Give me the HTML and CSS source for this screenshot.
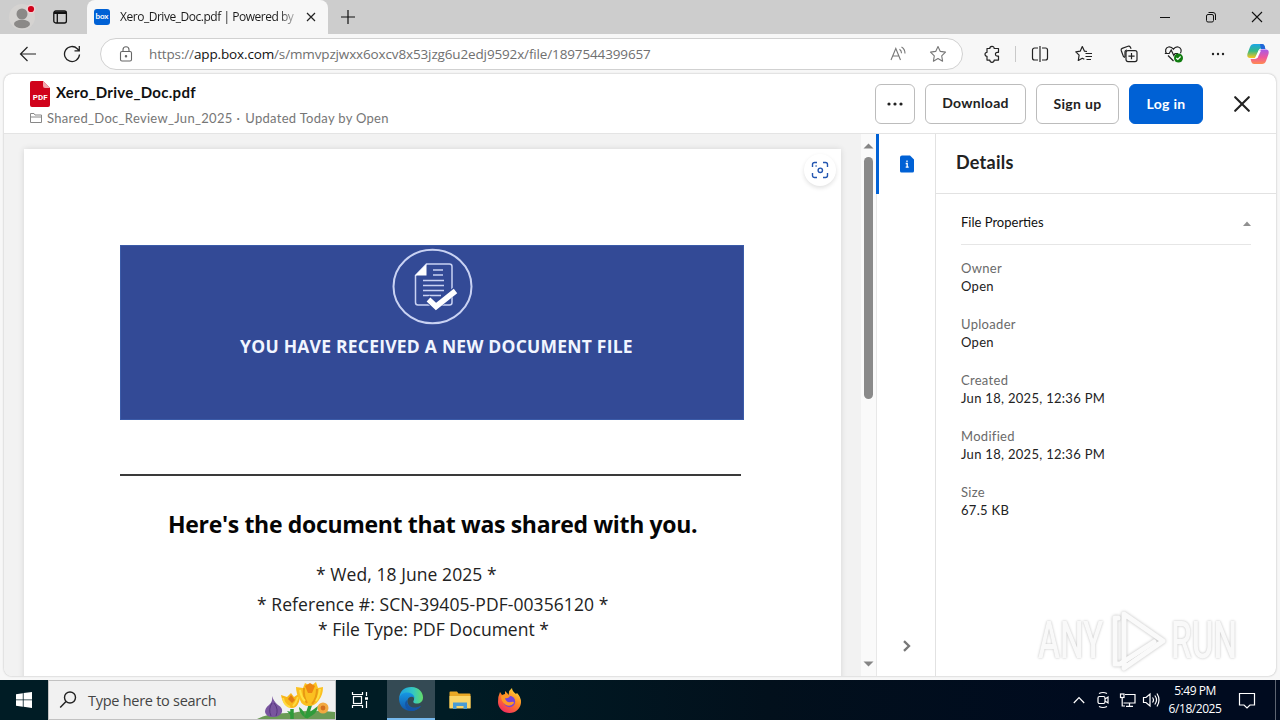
FILE: index.html
```html
<!DOCTYPE html>
<html lang="en">
<head>
<meta charset="utf-8">
<title>Xero_Drive_Doc.pdf | Powered by Box</title>
<link rel="stylesheet" href="styles.css">
</head>
<body>
<div class="desktop">
  <div class="tabstrip">
    <svg class="profile" width="30" height="34" viewBox="0 0 30 34"><circle cx="15" cy="17" r="13" fill="#d5d3d1"/><circle cx="15" cy="14" r="5.500" fill="#8b8987"/><ellipse cx="15" cy="24" rx="8" ry="4.200" fill="#8b8987"/><circle cx="24" cy="9" r="4.500" fill="#f0d0d2"/><circle cx="24" cy="9" r="3.100" fill="#d0021b"/></svg>
    <svg class="tabmenu" width="16" height="16" viewBox="0 0 16 16" fill="none" stroke="#111" stroke-width="1.300"><rect x="1.800" y="2" width="12.600" height="12" rx="2"/><path d="M2 3.800h12.400" stroke-width="2.400"/><path d="M5.300 4v10"/></svg>
    <div class="tab">
      <span class="favicon">box</span>
      <span class="tab-title">Xero_Drive_Doc.pdf | Powered by</span>
      <svg width="10" height="10" viewBox="0 0 10 10" stroke="#222" stroke-width="1.200"><path d="M1 1l8 8M9 1l-8 8"/></svg>
    </div>
    <svg class="newtab" width="14" height="14" viewBox="0 0 14 14" stroke="#111" stroke-width="1.200"><path d="M0 7h14M7 0v14"/></svg>
    <div class="winctl">
      <svg width="12" height="12" viewBox="0 0 12 12" stroke="#111"><path d="M1 6.500h10"/></svg>
      <svg width="12" height="12" viewBox="0 0 12 12" fill="none" stroke="#111"><rect x="1.500" y="3.500" width="7" height="7.500" rx="1.500"/><path d="M3.500 1.500h4.500a2.500 2.500 0 0 1 2.500 2.500v5"/></svg>
      <svg width="12" height="12" viewBox="0 0 12 12" stroke="#111" stroke-width="1.100"><path d="M1 1l10 10M11 1L1 11"/></svg>
    </div>
  </div>
  <div class="toolbar">
    <svg class="back" width="18" height="16" viewBox="0 0 18 16" fill="none" stroke="#222" stroke-width="1.200"><path d="M17 8H1.500M8.500 1L1.500 8l7 7"/></svg>
    <svg class="reload" width="18" height="18" viewBox="0 0 18 18" fill="none" stroke="#222" stroke-width="1.300"><path d="M16.500 9.500A7.500 7.500 0 1 1 14.300 3.700L16 5.500M16.300 1v4.800h-4.800"/></svg>
    <div class="address">
      <svg class="lock" width="14" height="16" viewBox="0 0 14 16" fill="none" stroke="#666" stroke-width="1.100"><rect x="1.500" y="5.500" width="11" height="9.500" rx="1.500"/><path d="M4 5.500V3.800a3 3 0 0 1 6 0v1.700"/><circle cx="7" cy="10.200" r=".7" fill="#555"/></svg>
      <span class="url">https://<b>app.box.com</b>/s/mmvpzjwxx6oxcv8x53jzg6u2edj9592x/file/1897544399657</span>
      <svg class="aloud" width="17" height="16" viewBox="0 0 17 16" fill="none" stroke="#777" stroke-width="1.100"><path d="M1 14L5.800 2.500 10.500 14M2.700 10h6.200M9.500 3.200q2 1.300 2 4M11.500 1q3.500 2 3.500 6.500"/></svg>
      <svg class="star" width="18" height="18" viewBox="0 0 18 18" fill="none" stroke="#777" stroke-width="1.100" stroke-linejoin="round"><path d="M9 1.500l2.300 4.900 5.200.7-3.800 3.700.9 5.400L9 13.600l-4.600 2.600.9-5.400L1.500 7.100l5.200-.7z"/></svg>
    </div>
    <div class="tools">
      <svg width="18" height="18" viewBox="0 0 18 18" fill="none" stroke="#222" stroke-width="1.200" stroke-linejoin="round"><path d="M4 3.500h2.800a2.200 2.200 0 0 1 4.400 0h4.300v3.800h-1.200a1.900 1.900 0 0 0 0 3.800h1.200v4h-4.300a2.200 2.200 0 0 1-4.400 0H4v-3.800a2 2 0 0 1 0-4z"/></svg>
      <i class="sep"></i>
      <svg width="18" height="18" viewBox="0 0 18 18" fill="none" stroke="#222" stroke-width="1.200"><path d="M7 3H3.500A2 2 0 0 0 1.500 5v8a2 2 0 0 0 2 2H7M11 3h3.500a2 2 0 0 1 2 2v8a2 2 0 0 1-2 2H11M9 1v16"/></svg>
      <svg width="18" height="18" viewBox="0 0 18 18" fill="none" stroke="#222" stroke-width="1.200" stroke-linejoin="round"><path d="M12 6.500l-2.500-.3L7.300 1.600 5.200 6.200.8 6.800l3.300 3.400-.8 5.300 4-2.200 2 1M10.500 8.500h6.500M10.500 11.500h6.500M11.500 14.500h4.500"/></svg>
      <svg width="18" height="18" viewBox="0 0 18 18" fill="none" stroke="#222" stroke-width="1.200"><path d="M5 12.500l-1.500-.8L1.200 5.500Q.8 4 2.200 3.400L8 1.300q1.500-.5 2.300.8l.8 1.700M5 12V7a2 2 0 0 1 2-2"/><rect x="6" y="5.600" width="11" height="11" rx="2"/><path d="M11.500 8v6.200M8.400 11.100h6.200"/></svg>
      <svg width="20" height="18" viewBox="0 0 20 18" fill="none" stroke="#222" stroke-width="1.200"><path d="M2.500 8.500C.8 6 1.500 2.500 4.500 2 7 1.600 8.500 3 9.400 4.200 10.400 2.800 12 1.600 14.200 2c2.800.6 3.800 3.600 2.300 6.300M.8 8.500h4.400l2-3.500 2.600 5.500L11 8.500h3M4 10.500l5.500 5.500"/><circle cx="14.500" cy="13" r="4.500" fill="#107c10" stroke="none"/><path d="M12.300 13l1.500 1.500 2.800-3" stroke="#fff"/></svg>
      <svg width="14" height="4" viewBox="0 0 14 4" fill="#222"><circle cx="2" cy="2" r="1.200"/><circle cx="7" cy="2" r="1.200"/><circle cx="12" cy="2" r="1.200"/></svg>
      <svg class="copilot" width="22" height="22" viewBox="0 0 22 22"><defs><linearGradient id="c1" x2="0" y2="1"><stop stop-color="#1ba6e8"/><stop offset=".5" stop-color="#35b985"/><stop offset="1" stop-color="#ffc51b"/></linearGradient><linearGradient id="c2" x2="0" y2="1"><stop stop-color="#a65ae8"/><stop offset=".55" stop-color="#ef579b"/><stop offset="1" stop-color="#ff8b50"/></linearGradient></defs><path d="M7 1h8q2 0 2.600 2l.7 2.500H14q-2 0-2.500 2L10 13q-.6 2-2.500 2H3Q-.5 15 .5 10.500L3 4q1-3 4-3z" fill="url(#c1)"/><path d="M13 1h2q2 0 2.600 2l.8 3H14z" fill="#2265d8"/><path d="M15 21H7q-2 0-2.600-2l-.8-3H8q2 0 2.500-2L12 8.500q.6-2 2.500-2H19q3.500 0 2.500 4.500L19 18q-1 3-4 3z" fill="url(#c2)"/><path d="M11.500 7.500l2.500 0-3.500 7.500H8z" fill="#fff"/></svg>
    </div>
  </div>

  <div class="site">
    <div class="box-header">
      <svg class="pdf" width="20" height="26" viewBox="0 0 20 26"><path d="M2 0h11l7 7v17a2 2 0 0 1-2 2H2a2 2 0 0 1-2-2V2a2 2 0 0 1 2-2z" fill="#d0021b"/><path d="M13 0l7 7h-5a2 2 0 0 1-2-2z" fill="#f2a6ad"/><text x="10.200" y="18.500" text-anchor="middle" class="pdf-label">PDF</text></svg>
      <div class="file-info">
        <div class="file-name">Xero_Drive_Doc.pdf</div>
        <div class="file-meta"><svg width="12" height="10" viewBox="0 0 12 10" fill="none" stroke="#888"><path d="M.500 9.500v-9h3.500l1 1.500h6.500v7.500zM.500 4h11"/></svg><span>Shared_Doc_Review_Jun_2025</span><span class="mid">·</span><span>Updated Today by Open</span></div>
      </div>
      <div class="actions">
        <div class="btn more"><svg width="16" height="4" viewBox="0 0 16 4" fill="#222"><circle cx="2" cy="2" r="1.600"/><circle cx="8" cy="2" r="1.600"/><circle cx="14" cy="2" r="1.600"/></svg></div>
        <div class="btn download">Download</div>
        <div class="btn signup">Sign up</div>
        <div class="btn login">Log in</div>
        <svg class="close" width="16" height="16" viewBox="0 0 16 16" stroke="#222" stroke-width="2.100" stroke-linecap="round"><path d="M1.200 1.200l13.600 13.600M14.800 1.200L1.200 14.800"/></svg>
      </div>
    </div>
    <div class="content">
      <div class="viewer">
        <div class="paper">
          <div class="scan"><svg width="18" height="18" viewBox="0 0 18 18" fill="none" stroke="#2456b0" stroke-width="1.400"><path d="M1.500 6V3.500a2 2 0 0 1 2-2H6M12 1.500h2.500a2 2 0 0 1 2 2V6M16.500 12v2.500a2 2 0 0 1-2 2H12M6 16.500H3.500a2 2 0 0 1-2-2V12"/><circle cx="9.300" cy="9.300" r="2.200"/><path d="M4.500 5h1.200"/></svg></div>
          <div class="banner">
            <svg width="82" height="78" viewBox="0 0 82 78" fill="none" stroke="#c9d2f3"><ellipse cx="41.500" cy="39.500" rx="39" ry="36.800" stroke-width="2"/><path d="M35.500 17H58.500a2.500 2.500 0 0 1 2.500 2.500v36a2.500 2.500 0 0 1-2.500 2.500H27a2.500 2.500 0 0 1-2.500-2.500V28.500z" stroke-width="1.500"/><path d="M35.500 17V28.500H24z" fill="#fff" stroke="none"/><path d="M42 23h10M42 28h10M32 33.500h21M32 38.500h21M32 43.500h21M32 48.500h18" stroke-width="1.500"/><path d="M36 51l8.500 8.500L66 42" stroke="#334a96" stroke-width="7"/><path d="M37.500 52.500l7.500 7L64.500 44" stroke="#fff" stroke-width="5.500"/></svg>
            <div class="banner-text">YOU HAVE RECEIVED A NEW DOCUMENT FILE</div>
          </div>
          <div class="rule"></div>
          <div class="doc-title">Here's the document that was shared with you.</div>
          <div class="doc-line date">* Wed, 18 June 2025 *</div>
          <div class="doc-line ref">* Reference #: SCN-39405-PDF-00356120 *</div>
          <div class="doc-line type">* File Type: PDF Document *</div>
        </div>
        <div class="scrollbar">
          <svg width="11" height="6" viewBox="0 0 11 6"><path d="M.5 5.500L5.500.5l5 5z" fill="#858585"/></svg>
          <i class="thumb"></i>
          <svg class="down" width="11" height="6" viewBox="0 0 11 6"><path d="M.5.5l5 5 5-5z" fill="#858585"/></svg>
        </div>
      </div>
      <div class="rail">
        <div class="rail-tab"><svg width="14" height="18" viewBox="0 0 14 18"><path d="M2 .5h8L14 4.500V16a1.500 1.500 0 0 1-1.500 1.500H1.500A1.500 1.500 0 0 1 0 16V2.500a2 2 0 0 1 2-2z" fill="#0061d5"/><path d="M7 5.500v1.500M5.700 8.500h1.500v3.700M5.700 12.200h3" stroke="#fff" stroke-width="1.300" fill="none"/></svg></div>
        <svg class="expand" width="10" height="12" viewBox="0 0 10 12" fill="none" stroke="#777" stroke-width="2.300"><path d="M2 1.200L7 6l-5 4.800"/></svg>
      </div>
      <div class="details">
        <div class="details-title">Details</div>
        <div class="props">
          <div class="props-head"><span>File Properties</span><svg width="8" height="5" viewBox="0 0 8 5"><path d="M0 5L4 .5 8 5z" fill="#909090"/></svg></div>
          <dl>
            <dt>Owner</dt><dd>Open</dd>
            <dt>Uploader</dt><dd>Open</dd>
            <dt>Created</dt><dd>Jun 18, 2025, 12:36 PM</dd>
            <dt>Modified</dt><dd>Jun 18, 2025, 12:36 PM</dd>
            <dt>Size</dt><dd>67.5 KB</dd>
          </dl>
        </div>
      </div>
    </div>
  </div>

  <div class="taskbar">
    <div class="start"><svg width="16" height="16" viewBox="0 0 16 16" fill="#fff"><path d="M0 2.200l6.800-1v6.300H0zM7.600 1.100L16 0v7.500H7.600zM0 8.300h6.800v6.400L0 13.800zM7.600 8.300H16V16l-8.400-1.200z"/></svg></div>
    <div class="search">
      <svg width="18" height="18" viewBox="0 0 18 18" fill="none" stroke="#222" stroke-width="1.400"><circle cx="11" cy="6.500" r="5.500"/><path d="M7 10.500L1.200 16.500"/></svg>
      <span>Type here to search</span>
      <svg class="flowers" width="78" height="38" viewBox="0 0 78 38"><path d="M0 38Q12 31 36 32q14-4 42-1v7z" fill="#6a9b55"/><path d="M15 15q2 6 6 9 5 3 4 7-2 5-9 5t-8-5q0-4 4-7 4-3 3-9z" fill="#79559f"/><path d="M15 22q-4 6-1 13M17 22q5 6 2 13" stroke="#56367e" fill="none"/><path d="M35 28v10M54 22l-5 15" stroke="#2f9b3b" stroke-width="3.500"/><path d="M35 36l-5-6 5 1zM49 34l12-9q0 7-10 12zM46 35q-4-4-4-9 6 4 6 10z" fill="#2f9b3b"/><path d="M24 14l6 2 4-4 3 4 6-4q0 8-2 11-2 4-6 4t-7-4q-3-3-4-9z" fill="#f8b719"/><path d="M26 17q1 7 7 9M41 16q-2 6-5 9" stroke="#ffda40" stroke-width="2" fill="none"/><path d="M34 14l4 5-3 3-4-4z" fill="#e27b13"/><path d="M39 6l7 1 2-5 6 3 5-4 2 6 5-1q0 8-4 13-4 6-10 6-7 0-9-6-4-6-4-13z" fill="#fbc020"/><path d="M47 7q-1 9 3 15M60 8q0 9-5 15" stroke="#e99912" stroke-width="2" fill="none"/><path d="M43 9q1 7 5 11M63 8q-1 8-4 12" stroke="#ffe040" stroke-width="2" fill="none"/><path d="M48 5l5-3 5 3-3 7h-4z" fill="#ed8612"/><circle cx="66" cy="27" r="5.500" fill="#f2a940"/><circle cx="66" cy="27" r="2.400" fill="#d36e1e"/></svg>
    </div>
    <div class="task view"><svg width="18" height="18" viewBox="0 0 18 18" fill="none" stroke="#fff" stroke-width="1.200"><path d="M1.500 1v2.500h10V1M1.500 17v-2.500h10V17M15.500 1v4M15.500 10v7"/><rect x="2.500" y="5.500" width="8" height="7"/><path d="M14 7.500h3" stroke-width="2.500"/></svg></div>
    <div class="task active"><svg width="24" height="24" viewBox="0 0 24 24"><defs><linearGradient id="e1"><stop stop-color="#1b9ee5"/><stop offset=".6" stop-color="#35c8c0"/><stop offset="1" stop-color="#63dc68"/></linearGradient><linearGradient id="e2" x2="0" y2="1"><stop stop-color="#1698e4"/><stop offset="1" stop-color="#1255a8"/></linearGradient></defs><path d="M0 12Q1 0 12.500 0C20 0 24 5.500 24 10.500c0 4-3 6-6 6-3.500 0-4.500-1.500-3-3.500C16 9 12 7 8.500 7 4 7 1 9 0 12z" fill="url(#e1)"/><path d="M0 12C1 7 5 5 9 5.500c4 .3 6.500 3 6.500 5.500-2-2-6-1.500-7 2-1 5 4 9 9.500 7.500l4-1.500Q18 24 12 24 1 23.500 0 12z" fill="url(#e2)"/><path d="M8 13c-1 5 4 9 9.500 7.500l4.500-1.500q-4 5-10 5C5 22 5 15 8 13z" fill="#1554a5"/></svg></div>
    <div class="task"><svg width="22" height="18" viewBox="0 0 22 18"><path d="M.500 17V1.500Q.500.500 1.500.500H8l1.500 2H20.500q1 0 1 1V17z" fill="#e9a825"/><path d="M.500 5h21v12.500H.500z" fill="#fbd568"/><path d="M4 18v-6.500h14V18h-3.500v-3h-7v3z" fill="#4a9cd4"/></svg></div>
    <div class="task"><svg width="24" height="25" viewBox="0 0 24 25"><defs><linearGradient id="f1" x1=".8" x2=".2" y2="1"><stop stop-color="#ffe03a"/><stop offset=".45" stop-color="#ff8524"/><stop offset="1" stop-color="#f22365"/></linearGradient></defs><path d="M3 4l2 3 3-1V3l4 4q-1-4 3-7 0 3 4 6l1-1q4 4 4 9A11.500 11 0 0 1 1 14Q1 8 3 4z" fill="url(#f1)"/><circle cx="12.500" cy="13.500" r="5.700" fill="#7944d7"/><path d="M4 8q5-3 9 0-2 3-5 2 1 5 6 4 3-1 3 1-3 4-8 2-5-3-5-9z" fill="#ff9825"/></svg></div>
    <div class="tray">
      <div class="tray-icons">
        <svg width="12" height="8" viewBox="0 0 12 8" fill="none" stroke="#fff" stroke-width="1.200"><path d="M.800 7L6 1.500 11.200 7"/></svg>
        <svg width="14" height="18" viewBox="0 0 14 18" fill="none" stroke="#fff" stroke-width="1.200"><rect x="2" y="5.500" width="7" height="7" rx="1.500"/><path d="M9 8l3-2v6l-3-2M3 2.500q4-2 8 0M3 15.500q4 2 8 0"/></svg>
        <svg width="17" height="16" viewBox="0 0 17 16" fill="none" stroke="#fff" stroke-width="1.200"><path d="M6 2.500h10V11H4.500M10.500 11v3M7 14.300h7"/><rect x="1.500" y="2" width="3.500" height="3.500"/><path d="M3.200 5.500V14H6"/></svg>
        <svg width="18" height="16" viewBox="0 0 18 16" fill="none" stroke="#fff" stroke-width="1.200"><path d="M1.500 5.500H4L8 2v12L4 10.500H1.500zM10.500 5.500q2 2.500 0 5M12.800 3.500q3.500 4.500 0 9M15 1.500q4 6.500 0 13"/></svg>
      </div>
      <div class="clock"><span>5:49 PM</span><span>6/18/2025</span></div>
      <svg class="notice" width="18" height="17" viewBox="0 0 18 17" fill="none" stroke="#fff" stroke-width="1.200"><path d="M1.500 1.500h15v11.500H12L9 16l-3-3H1.500z"/></svg>
    </div>
  </div>

  <div class="watermark">
    <span>ANY</span>
    <svg class="play" width="60" height="66" viewBox="0 0 60 66" fill="none" stroke="#fafafa" stroke-width="5" stroke-linejoin="round" stroke-linecap="round"><path d="M15 6L54 33 15 60z"/><path d="M9 10H6v46h5l34-22"/></svg>
    <span>RUN</span>
  </div>
</div>
</body>
</html>
```

FILE: styles.css
```css
* { box-sizing: border-box; }
body { margin: 0; font-family: "Open Sans", "Noto Sans", sans-serif; }
svg { display: block; flex: none; }
.desktop { position: relative; width: 1280px; height: 720px; overflow: hidden; display: flex; flex-direction: column; background: #f7f7f7; }

.tabstrip { height: 34px; flex: none; background: #cdcdcd; display: flex; align-items: center; padding-left: 7px; }
.tabmenu { margin-left: 15px; }
.tab { margin-left: 19px; width: 241px; height: 34px; background: #f7f7f7; border-radius: 8px 8px 0 0; display: flex; align-items: center; padding-left: 7px; }
.favicon { width: 16px; height: 16px; border-radius: 3px; background: #0061d5; color: #fff; font: bold 8px/14px Lato, sans-serif; text-align: center; }
.tab-title { margin-left: 10px; width: 176px; margin-right: 10px; font-size: 12px; line-height: 20px; letter-spacing: -.47px; white-space: nowrap; color: #1b1b1b; -webkit-mask-image: linear-gradient(90deg, #000 158px, transparent 182px); mask-image: linear-gradient(90deg, #000 158px, transparent 182px); }
.newtab { margin-left: 13px; }
.winctl { margin-left: auto; display: flex; gap: 34px; padding-right: 17px; }

.toolbar { height: 40px; flex: none; display: flex; align-items: center; padding-left: 19px; }
.reload { margin-left: 26px; }
.address { margin-left: 19px; width: 863px; height: 32px; border: 1px solid #d1d1d1; border-radius: 16px; background: #fff; display: flex; align-items: center; padding-left: 18px; }
.url { margin-left: 16px; font-size: 13.500px; line-height: 20px; letter-spacing: -.14px; color: #707070; white-space: nowrap; width: 720px; }
.url b { font-weight: 400; color: #111; }
.aloud { margin-left: 21px; }
.star { margin-left: 22px; }
.tools { flex: 1; display: flex; align-items: center; justify-content: space-between; padding: 0 11px 0 20px; }
.sep { width: 1px; height: 16px; background: #c9c9c9; margin: 0 -12px 0 -12px; }
.copilot { margin-left: -4px; }

.site { margin: 0 4px; height: 602px; flex: none; background: #fff; border-radius: 8px; box-shadow: 0 0 2px #aaa; overflow: hidden; display: flex; flex-direction: column; font-family: Lato, sans-serif; color: #222; }
.box-header { height: 60px; flex: none; border-bottom: 1px solid #e4e4e4; display: flex; padding-left: 26px; }
.pdf { margin-top: 7px; }
.pdf-label { font: bold 8px Roboto, sans-serif; fill: #fff; }
.file-info { margin-left: 6px; }
.file-name { margin-top: 8px; font-size: 15px; line-height: 20px; font-weight: 700; letter-spacing: .27px; color: #111; }
.file-meta { margin: 7px 0 0 -26px; display: flex; align-items: center; font-size: 13px; line-height: 18px; letter-spacing: .3px; color: #767676; white-space: nowrap; }
.file-meta svg { margin-right: 5px; }
.mid { margin: 0 5px 0 4px; }
.actions { margin-left: auto; display: flex; gap: 10px; padding: 10px 26px 0 0; }
.btn { height: 40px; border: 1px solid #bcbcbc; border-radius: 6px; font-size: 14px; font-weight: 700; line-height: 38px; letter-spacing: .3px; text-align: center; }
.more { width: 40px; display: flex; align-items: center; justify-content: center; }
.download { width: 101px; line-height: 36px; }
.signup { width: 83px; }
.login { width: 74px; background: #0061d5; border-color: #0061d5; color: #fff; }
.close { margin: 12px 0 0 21px; }

.content { flex: 1; display: flex; min-height: 0; }
.viewer { width: 872px; background: #f2f2f2; display: flex; padding-left: 20px; }
.paper { position: relative; width: 817px; height: 540px; margin-top: 15px; background: #fff; box-shadow: 0 0 6px rgba(0,0,0,.12); font-family: "Open Sans", "Noto Sans", sans-serif; padding: 96px 0 0 96px; }
.scan { position: absolute; right: 5px; top: 5px; width: 32px; height: 32px; border-radius: 16px; background: #fff; box-shadow: 0 2px 4px rgba(0,0,0,.12); display: flex; align-items: center; justify-content: center; }
.banner { width: 624px; height: 175px; background: #334a96; border: 1px solid #3b5ba8; padding-top: 1px; display: flex; flex-direction: column; align-items: center; }
.banner-text { margin-top: 9px; padding-left: 9px; font-size: 17.500px; font-weight: 700; line-height: 24px; letter-spacing: .23px; color: #f1f5ff; white-space: nowrap; }
.rule { width: 621px; height: 2px; margin-top: 54px; background: #3a3a3a; }
.doc-title { margin: 32px 0 0 48px; font-size: 23px; line-height: 32px; font-weight: 700; letter-spacing: -.33px; color: #050505; white-space: nowrap; }
.doc-line { font-size: 17.500px; line-height: 25px; letter-spacing: .07px; color: #222; white-space: nowrap; }
.date { margin: 22px 0 0 196px; }
.ref { margin: 5px 0 0 137px; }
.type { margin-left: 198px; letter-spacing: 0; }
.scrollbar { margin-left: 20px; width: 15px; background: #fafafa; display: flex; flex-direction: column; align-items: center; padding: 9px 0 9px; }
.thumb { width: 9px; height: 242px; border-radius: 5px; background: #8a8a8a; margin-top: 8px; }
.down { margin-top: auto; }
.rail { width: 60px; border-right: 1px solid #e2e2e2; border-left: 1px solid #e8e8e8; display: flex; flex-direction: column; align-items: center; }
.rail-tab { width: 60px; height: 60px; margin-left: -1px; border-left: 3px solid #0061d5; display: flex; align-items: center; justify-content: center; }
.expand { margin: auto 0 24px 2px; }
.details { flex: 1; }
.details-title { height: 60px; border-bottom: 1px solid #e2e2e2; padding: 16px 0 0 20px; font-size: 18px; line-height: 24px; font-weight: 700; letter-spacing: .25px; }
.props { padding: 0 25px; }
.props-head { height: 51px; border-bottom: 1px solid #e6e6e6; display: flex; justify-content: space-between; align-items: center; font-size: 13px; color: #111; padding-top: 8px; }
.props-head span { margin-top: -2px; }
dl { margin: 14px 0 0; font-size: 13px; line-height: 18px; letter-spacing: .3px; }
dt { color: #6a6a6a; }
dd { margin: 0 0 20px; }

.taskbar { margin-top: 4px; height: 40px; flex: none; display: flex; background: linear-gradient(90deg, #001c25 35%, #02101c 60%, #000b1f 85%); color: #fff; }
.start { width: 48px; display: flex; align-items: center; justify-content: center; }
.search { width: 288px; background: #f1f1f1; border: 1px solid #c2c2c2; display: flex; align-items: center; padding-left: 10px; color: #444; font-size: 14.500px; }
.search span { margin-left: 11px; width: 130px; white-space: nowrap; letter-spacing: -.27px; }
.flowers { margin-left: auto; }
.task { width: 49px; display: flex; align-items: center; justify-content: center; }
.view { width: 51px; padding-right: 3px; }
.active { width: 48px; background: #344a54; border-bottom: 2px solid #76b9ed; }
.tray { margin-left: auto; display: flex; align-items: center; }
.tray-icons { display: grid; grid-template-columns: repeat(4, 24px); justify-items: center; align-items: center; }
.clock { width: 64px; display: flex; flex-direction: column; align-items: center; font-size: 12px; line-height: 18px; letter-spacing: -.45px; white-space: nowrap; }
.notice { margin-left: 11px; }
.tray::after { content: ""; width: 1px; height: 40px; margin: 0 4px 0 19px; background: #5d6572; }

.watermark { position: absolute; left: 1038px; top: 607px; display: flex; align-items: center; font: 500 51px/68px Roboto, sans-serif; color: #f9f9f9; text-shadow: 0 0 3px #bbb; }
.watermark span { width: 64px; transform-origin: left center; transform: scaleX(.65); }
.play { margin: 0 2px 0 7px; filter: drop-shadow(0 0 1.5px #bbb); }
```
